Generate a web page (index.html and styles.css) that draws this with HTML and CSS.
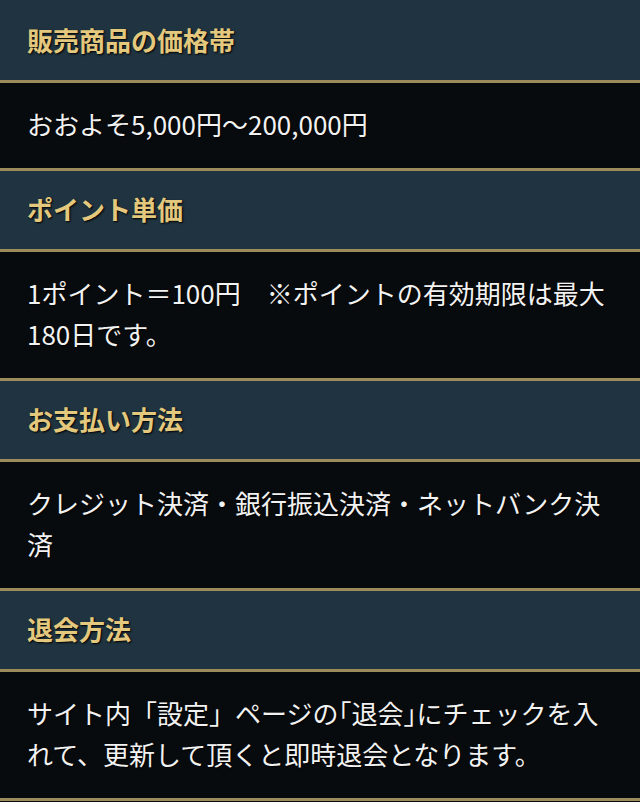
FILE: index.html
```html
<!DOCTYPE html>
<html lang="ja">
<head>
<meta charset="utf-8">
<title>販売商品の価格帯</title>
<link rel="stylesheet" href="styles.css">
</head>
<body>
<dl class="info">
  <dt class="head">販売商品の価格帯</dt>
  <dd class="body">おおよそ5,000円〜200,000円</dd>
  <dt class="head">ポイント単価</dt>
  <dd class="body">1ポイント＝100円　※ポイントの有効期限は最大180日です。</dd>
  <dt class="head">お支払い方法</dt>
  <dd class="body">クレジット決済・銀行振込決済・ネットバンク決済</dd>
  <dt class="head">退会方法</dt>
  <dd class="body">サイト内「設定」ページの｢退会｣にチェックを入れて、更新して頂くと即時退会となります。</dd>
</dl>
</body>
</html>
```
FILE: styles.css
```css
html, body {
  margin: 0;
  padding: 0;
  background: #080b0e;
}
body {
  font-family: "Noto Sans CJK JP", "Noto Sans", sans-serif;
}
.info {
  margin: 0;
  padding: 0;
  display: flex;
  flex-direction: column;
}
.head {
  margin: 0;
  background: #1f3440;
  color: #e3c87e;
  font-size: 26px;
  font-weight: 700;
  line-height: 40px;
  padding: 18px 26px 20px 27px;
  border-bottom: 3px solid #9c8b5b;
  text-shadow: 1px 1px 2px #000;
}
.head:first-child {
  padding-top: 20px;
}
.body {
  margin: 0;
  background: #080b0e;
  color: #f2f2f2;
  font-size: 26px;
  font-weight: 400;
  line-height: 41px;
  padding: 20px 26px 24px 27px;
  border-bottom: 3px solid #9c8b5b;
  text-shadow: 1px 1px 1px #000;
}
```
